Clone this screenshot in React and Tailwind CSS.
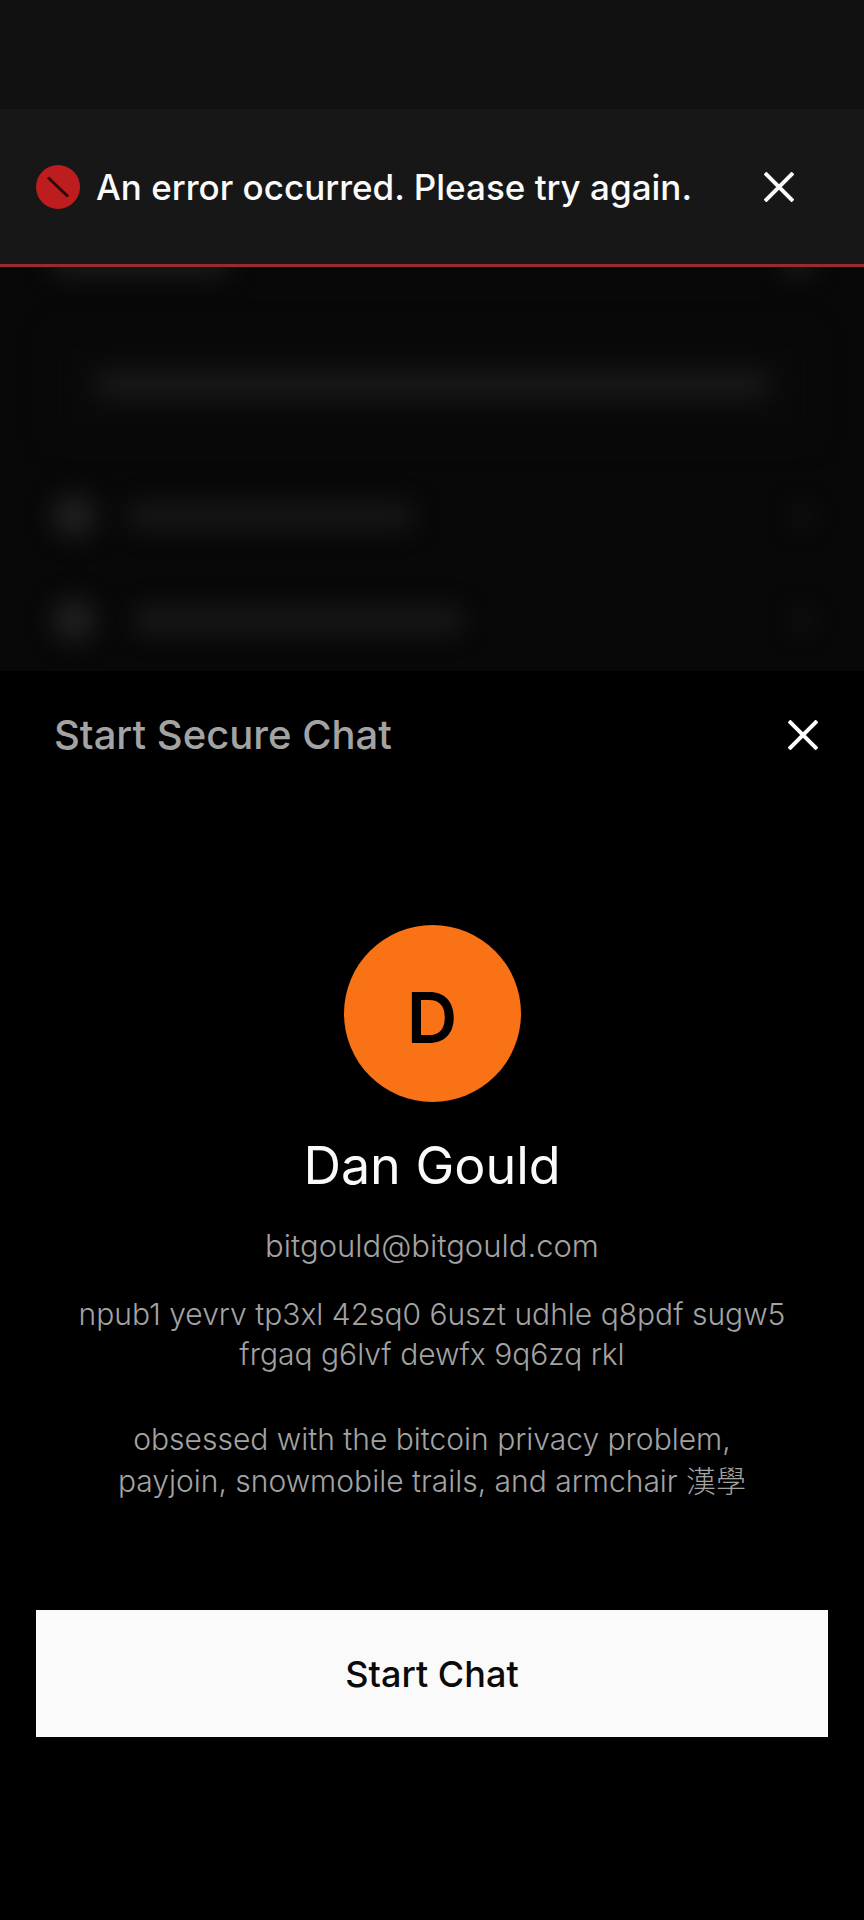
import React, { useState } from 'react';

const user = {
  name: 'Dan Gould',
  email: 'bitgould@bitgould.com',
  npub: 'npub1 yevrv tp3xl 42sq0 6uszt udhle q8pdf sugw5 frgaq g6lvf dewfx 9q6zq rkl',
  about: 'obsessed with the bitcoin privacy problem, payjoin, snowmobile trails, and armchair 漢學',
};

function CloseIcon() {
  return (
    <svg viewBox="0 0 30 30" className="size-[30px]" fill="none" stroke="currentColor" strokeWidth="4" aria-hidden="true">
      <path d="M1 1 29 29M29 1 1 29" />
    </svg>
  );
}

function ErrorIcon() {
  return (
    <svg viewBox="0 0 44 44" className="size-11 shrink-0" aria-hidden="true">
      <circle cx="22" cy="22" r="22" fill="#bd1d1f" />
      <path d="M12 12.5 32 31.5" stroke="#2b0b0b" strokeWidth="3" />
    </svg>
  );
}

function Toast({ onClose }) {
  return (
    <div role="alert" className="flex h-[158px] items-center border-b-3 border-[#992b30] bg-[#171717] pl-9 pr-16">
      <ErrorIcon />
      <p className="ml-4 flex-1 text-[35px] leading-[48px] font-medium text-neutral-50">
        An error occurred. Please try again.
      </p>
      <button type="button" onClick={onClose} aria-label="Dismiss" className="p-[6px] text-neutral-50">
        <CloseIcon />
      </button>
    </div>
  );
}

// The page behind the sheet, out of focus
function Backdrop() {
  return (
    <div aria-hidden="true" className="h-[404px] overflow-hidden bg-[#080808]">
      <div className="-mt-4 px-12 blur-[12px]">
        <div className="flex h-6 justify-between px-1">
          <div className="w-[176px] bg-[#1d1d1d]" />
          <div className="w-7 bg-[#1d1d1d]" />
        </div>
        <div className="mt-[54px] flex h-28 items-center bg-[#090909] px-12">
          <div className="h-6 flex-1 bg-[#1a1a1a]" />
        </div>
        <div className="mt-[50px] flex h-[50px] items-center pl-1">
          <div className="size-11 rounded-full bg-[#1f1f1f]" />
          <div className="ml-8 h-6 w-[284px] bg-[#191919]" />
          <div className="ml-auto mr-2 h-6 w-3 bg-[#161616]" />
        </div>
        <div className="mt-[54px] flex h-[50px] items-center pl-1">
          <div className="size-11 rounded-full bg-[#1f1f1f]" />
          <div className="ml-10 h-6 w-[326px] bg-[#1a1a1a]" />
          <div className="ml-auto mr-2 h-6 w-3 bg-[#161616]" />
        </div>
      </div>
    </div>
  );
}

export default function App() {
  const [showToast, setShowToast] = useState(true);
  const [open, setOpen] = useState(true);

  return (
    <div className="flex min-h-screen flex-col bg-black font-['Inter','Noto_Sans_CJK_TC',sans-serif]">
      <div className="h-[109px] bg-[#111111]" />
      {showToast && <Toast onClose={() => setShowToast(false)} />}
      <Backdrop />

      {open && (
        <section className="flex-1 bg-black px-9 pb-9">
          <header className="flex h-32 items-center justify-between pl-[18px]">
            <h2 className="text-[40px] leading-[48px] font-medium text-[#a3a3a3]">Start Secure Chat</h2>
            <button type="button" onClick={() => setOpen(false)} aria-label="Close" className="p-[10px] text-white">
              <CloseIcon />
            </button>
          </header>

          <div className="mt-[126px] flex flex-col items-center text-center">
            <div className="flex size-[177px] items-center justify-center rounded-full bg-[#f97316] pt-2 text-[70px] leading-[80px] font-semibold text-black">
              {user.name[0]}
            </div>
            <h1 className="mt-8 text-[52px] leading-[64px] text-neutral-50">{user.name}</h1>
            <p className="mt-7 text-[31px] leading-[40px] font-light text-[#a3a3a3]">{user.email}</p>
            <p className="mt-7 px-6 text-[30px] leading-[40px] font-light text-[#a3a3a3]">{user.npub}</p>
            <p className="mt-11 px-12 text-[30px] leading-[42px] font-light text-[#a3a3a3]">{user.about}</p>
          </div>

          <button
            type="button"
            className="mt-[108px] h-[127px] w-full bg-neutral-50 text-[36px] leading-[48px] font-medium text-neutral-950"
          >
            Start Chat
          </button>
        </section>
      )}
    </div>
  );
}
